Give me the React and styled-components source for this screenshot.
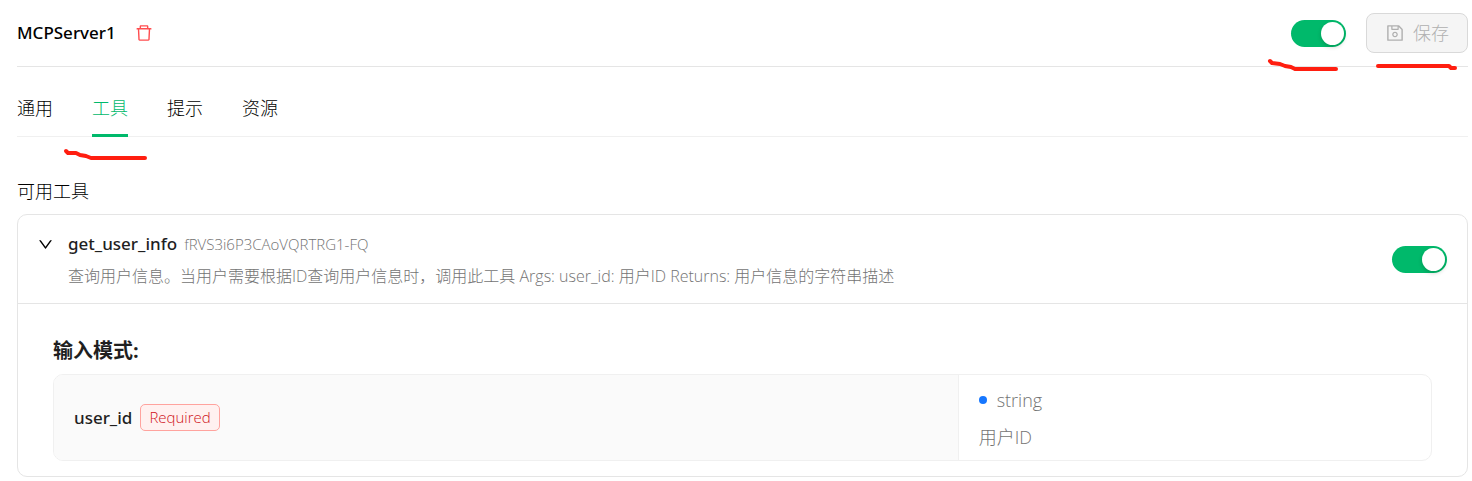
import { useState } from 'react'
import styled, { createGlobalStyle } from 'styled-components'
import { AiOutlineDelete, AiOutlineDown, AiOutlineSave } from 'react-icons/ai'

const colors = {
  primary: '#00b96b',
  text: '#000000',
  title: '#1f1f1f',
  muted: '#737373',
  disabled: '#b0b0b0',
  border: '#e5e5e5',
  lightBorder: '#f0f0f0',
  danger: '#ff4d4f',
  mark: '#ff1e10',
}

const nameFont = "'Noto Sans', 'Open Sans', sans-serif"

const GlobalStyle = createGlobalStyle`
  * {
    box-sizing: border-box;
  }

  body {
    margin: 0;
    background-color: #FFFFFF;
    color: ${colors.text};
    font-family: 'Open Sans', 'Noto Sans CJK SC', sans-serif;
    font-size: 18px;
    font-weight: 300;
    line-height: 28px;
  }

  button {
    font: inherit;
    color: inherit;
    background: none;
    border: none;
    padding: 0;
    cursor: pointer;
  }
`

const Page = styled.main`
  padding: 0 4px 4px 17px;
`

const Header = styled.header`
  position: relative;
  display: flex;
  align-items: center;
  justify-content: space-between;
  height: 67px;
  border-bottom: 1px solid ${colors.border};
`

const TitleGroup = styled.div`
  display: flex;
  align-items: center;
  gap: 18px;
`

const ServerName = styled.h1`
  margin: 0;
  font-family: ${nameFont};
  font-size: 17px;
  font-weight: 500;
`

const DeleteButton = styled.button`
  display: flex;
  color: ${colors.danger};
  font-size: 20px;
`

const Actions = styled.div`
  display: flex;
  align-items: center;
  gap: 20px;
`

const Switch = styled.input`
  appearance: none;
  flex: none;
  display: flex;
  justify-content: ${({ checked }) => (checked ? 'flex-end' : 'flex-start')};
  width: 55px;
  height: 27px;
  margin: 0;
  padding: 2px;
  border-radius: 14px;
  background-color: ${({ checked }) => (checked ? colors.primary : '#bfbfbf')};
  cursor: pointer;

  &::before {
    content: '';
    width: 23px;
    height: 23px;
    border-radius: 50%;
    background-color: #FFFFFF;
    box-shadow: 0 2px 4px rgba(0, 35, 11, 0.2);
  }
`

const SaveButton = styled.button`
  display: flex;
  align-items: center;
  justify-content: center;
  gap: 8px;
  width: 102px;
  height: 40px;
  border: 1px solid #d9d9d9;
  border-radius: 8px;
  background-color: #f5f5f5;
  color: ${colors.disabled};
  cursor: not-allowed;
`

const Marks = styled.svg`
  position: absolute;
  overflow: visible;
  pointer-events: none;
  fill: none;
  stroke: ${colors.mark};
  stroke-width: 4;
  stroke-linecap: round;
  stroke-linejoin: round;
`

const HeaderMarks = styled(Marks)`
  top: 56px;
  right: 0;
`

const TabMark = styled(Marks)`
  top: 80px;
  left: 46px;
`

const Tabs = styled.nav`
  position: relative;
  display: flex;
  gap: 39px;
  height: 70px;
  border-bottom: 1px solid ${colors.lightBorder};
`

const Tab = styled.button`
  height: 70px;
  padding-top: 12px;
  border-top: 3px solid transparent;
  border-bottom: 3px solid ${({ $active }) => ($active ? colors.primary : 'transparent')};
  color: ${({ $active }) => ($active ? colors.primary : colors.text)};
`

const SectionTitle = styled.h2`
  margin: 40px 0 9px;
  font-size: 18px;
  font-weight: 300;
`

const Card = styled.section`
  border: 1px solid ${colors.border};
  border-radius: 10px;
`

const CardHeader = styled.div`
  display: flex;
  align-items: center;
  gap: 14px;
  height: 89px;
  padding: 0 20px 0 19px;
  border-bottom: 1px solid ${colors.border};
`

const CollapseButton = styled.button`
  display: flex;
  align-self: flex-start;
  padding-top: 21px;
  font-size: 17px;
`

const ToolInfo = styled.div`
  flex: 1;
  min-width: 0;
  padding-top: 2px;
`

const ToolTitle = styled.div`
  display: flex;
  align-items: center;
  gap: 7px;
  height: 32px;
`

const ToolName = styled.h3`
  margin: 0;
  color: ${colors.title};
  font-family: ${nameFont};
  font-size: 17px;
  font-weight: 500;
`

const ToolId = styled.span`
  color: ${colors.muted};
  font-size: 15px;
`

const Description = styled.p`
  margin: 0;
  color: ${colors.muted};
  font-size: 16px;
  line-height: 32px;
`

const CardBody = styled.div`
  padding: 33px 35px 15px;
`

const SchemaTitle = styled.h4`
  margin: 0 0 9px;
  color: ${colors.title};
  font-size: 20px;
  font-weight: 700;
`

const SchemaTable = styled.table`
  width: 100%;
  table-layout: fixed;
  border: 1px solid ${colors.lightBorder};
  border-spacing: 0;
  border-radius: 10px;
  overflow: hidden;
  text-align: left;
`

const NameCell = styled.th`
  width: 65.7%;
  padding: 0 20px;
  border-right: 1px solid ${colors.lightBorder};
  background-color: #fafafa;
  color: ${colors.title};
  font-family: ${nameFont};
  font-size: 17px;
  font-weight: 500;
`

const NameRow = styled.div`
  display: flex;
  align-items: center;
  gap: 8px;
`

const RequiredTag = styled.span`
  padding: 0 8px;
  border: 1px solid #ffa39e;
  border-radius: 5px;
  background-color: #fff1f0;
  color: #cf1322;
  font-family: 'Open Sans', sans-serif;
  font-size: 15px;
  font-weight: 300;
  line-height: 25px;
`

const TypeCell = styled.td`
  padding: 11px 20px 9px;
  color: ${colors.muted};
  font-size: 18px;
`

const TypeName = styled.div`
  display: flex;
  align-items: center;
  gap: 10px;
  margin-bottom: 9px;

  &::before {
    content: '';
    width: 8px;
    height: 8px;
    border-radius: 50%;
    background-color: #1677ff;
  }
`

const tabs = ['通用', '工具', '提示', '资源']

const App = () => {
  const [activeTab, setActiveTab] = useState('工具')
  const [serverActive, setServerActive] = useState(true)
  const [toolEnabled, setToolEnabled] = useState(true)
  const [expanded, setExpanded] = useState(true)

  return (
    <Page>
      <GlobalStyle />
      <Header>
        <TitleGroup>
          <ServerName>MCPServer1</ServerName>
          <DeleteButton type='button' aria-label='删除'><AiOutlineDelete /></DeleteButton>
        </TitleGroup>
        <Actions>
          <Switch
            type='checkbox'
            role='switch'
            aria-label='MCPServer1'
            checked={serverActive}
            onChange={() => setServerActive(!serverActive)}
          />
          <SaveButton type='button' disabled><AiOutlineSave size={20} />保存</SaveButton>
        </Actions>
        <HeaderMarks width='200' height='16' aria-hidden='true'>
          <path d='M2 5 L4 7 L12 8 L17 10 L23 11 L27 13 L68 13' />
          <path d='M110 10 L181 10 L183 12 L187 12' />
        </HeaderMarks>
      </Header>

      <Tabs role='tablist'>
        {tabs.map((tab) => (
          <Tab
            key={tab}
            type='button'
            role='tab'
            aria-selected={tab === activeTab}
            $active={tab === activeTab}
            onClick={() => setActiveTab(tab)}
          >
            {tab}
          </Tab>
        ))}
        <TabMark width='86' height='14' aria-hidden='true'>
          <path d='M3 4 L5 6 L13 6 L17 8 L23 9 L28 11 L82 11' />
        </TabMark>
      </Tabs>

      <SectionTitle>可用工具</SectionTitle>
      <Card>
        <CardHeader>
          <CollapseButton
            type='button'
            aria-label='get_user_info'
            aria-expanded={expanded}
            onClick={() => setExpanded(!expanded)}
          >
            <AiOutlineDown />
          </CollapseButton>
          <ToolInfo>
            <ToolTitle>
              <ToolName>get_user_info</ToolName>
              <ToolId>fRVS3i6P3CAoVQRTRG1-FQ</ToolId>
            </ToolTitle>
            <Description>
              查询用户信息。当用户需要根据ID查询用户信息时，调用此工具 Args: user_id: 用户ID Returns: 用户信息的字符串描述
            </Description>
          </ToolInfo>
          <Switch
            type='checkbox'
            role='switch'
            aria-label='get_user_info'
            checked={toolEnabled}
            onChange={() => setToolEnabled(!toolEnabled)}
          />
        </CardHeader>
        {expanded && (
          <CardBody>
            <SchemaTitle>输入模式:</SchemaTitle>
            <SchemaTable>
              <tbody>
                <tr>
                  <NameCell scope='row'>
                    <NameRow>
                      user_id
                      <RequiredTag>Required</RequiredTag>
                    </NameRow>
                  </NameCell>
                  <TypeCell>
                    <TypeName>string</TypeName>
                    用户ID
                  </TypeCell>
                </tr>
              </tbody>
            </SchemaTable>
          </CardBody>
        )}
      </Card>
    </Page>
  )
}

export default App
